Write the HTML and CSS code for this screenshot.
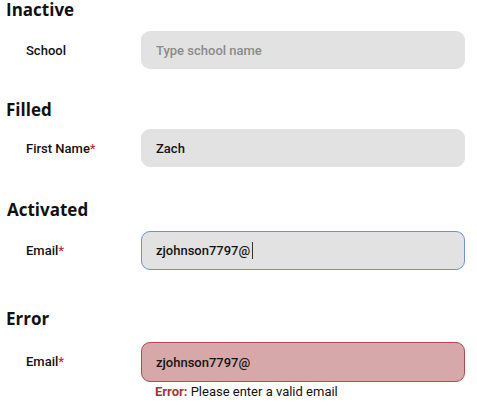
FILE: index.html
```html
<!DOCTYPE html>
<html>
<head>
<meta charset="utf-8">
<link rel="stylesheet" href="styles.css">
</head>
<body>
<div class="page">
  <section class="state state-inactive">
    <h2 class="state-title">Inactive</h2>
    <div class="field-row">
      <label class="field-label">School</label>
      <div class="field-col">
        <div class="input input-inactive"><span class="placeholder">Type school name</span></div>
      </div>
    </div>
  </section>
  <section class="state state-filled">
    <h2 class="state-title">Filled</h2>
    <div class="field-row">
      <label class="field-label">First Name<span class="req">*</span></label>
      <div class="field-col">
        <div class="input"><span class="value">Zach</span></div>
      </div>
    </div>
  </section>
  <section class="state state-active">
    <h2 class="state-title title-active">Activated</h2>
    <div class="field-row">
      <label class="field-label">Email<span class="req">*</span></label>
      <div class="field-col">
        <div class="input input-active"><span class="value">zjohnson7797@</span><span class="caret"></span></div>
      </div>
    </div>
  </section>
  <section class="state state-error">
    <h2 class="state-title">Error</h2>
    <div class="field-row">
      <label class="field-label">Email<span class="req">*</span></label>
      <div class="field-col">
        <div class="input input-error"><span class="value">zjohnson7797@</span></div>
        <div class="error-msg"><b class="error-label">Error:</b> Please enter a valid email</div>
      </div>
    </div>
  </section>
</div>
</body>
</html>
```

FILE: styles.css
```css
* { box-sizing: border-box; }
html, body { margin: 0; padding: 0; background: #fff; }
body { font-family: Roboto, "Noto Sans", sans-serif; color: #111; }

.page { display: flex; flex-direction: column; }

.state-title {
  margin: 0 0 0 6px;
  font-family: "Open Sans", "Noto Sans", sans-serif;
  font-weight: 700;
  font-size: 17px;
  line-height: 20px;
  color: #111;
}
.title-active { margin-left: 7px; }

.state-inactive { padding-top: 0; }
.state-filled { padding-top: 31px; }
.state-active { padding-top: 33px; }
.state-error { padding-top: 39px; }

.field-row {
  display: flex;
  align-items: flex-start;
  margin-top: 11px;
}
.state-filled .field-row { margin-top: 9px; }
.state-error .field-row { margin-top: 13px; }

.field-label {
  width: 141px;
  padding-left: 26px;
  height: 38px;
  display: flex;
  align-items: center;
  font-size: 13px;
  font-weight: 500;
  color: #111;
}
.req { color: #b0353f; }

.field-col { display: flex; flex-direction: column; }

.input {
  width: 324px;
  height: 38px;
  border-radius: 9px;
  background: #e2e2e2;
  display: flex;
  align-items: center;
  padding-left: 15px;
  font-size: 13px;
  font-weight: 500;
}
.placeholder { color: #8b8b8b; }
.value { color: #141414; }

.input-active {
  border: 1px solid #6f8ede;
  padding-left: 14px;
  height: 39px;
}
.caret {
  display: inline-block;
  width: 1px;
  height: 17px;
  background: #333;
  margin-left: 2px;
}
.input-error {
  background: #d6a8a9;
  border: 1px solid #b04a54;
  padding-left: 14px;
  height: 40px;
}

.error-msg {
  margin-top: 1px;
  padding-left: 14px;
  font-size: 13px;
  line-height: 18px;
  color: #111;
}
.error-label { color: #a6333e; font-weight: 700; }
```
